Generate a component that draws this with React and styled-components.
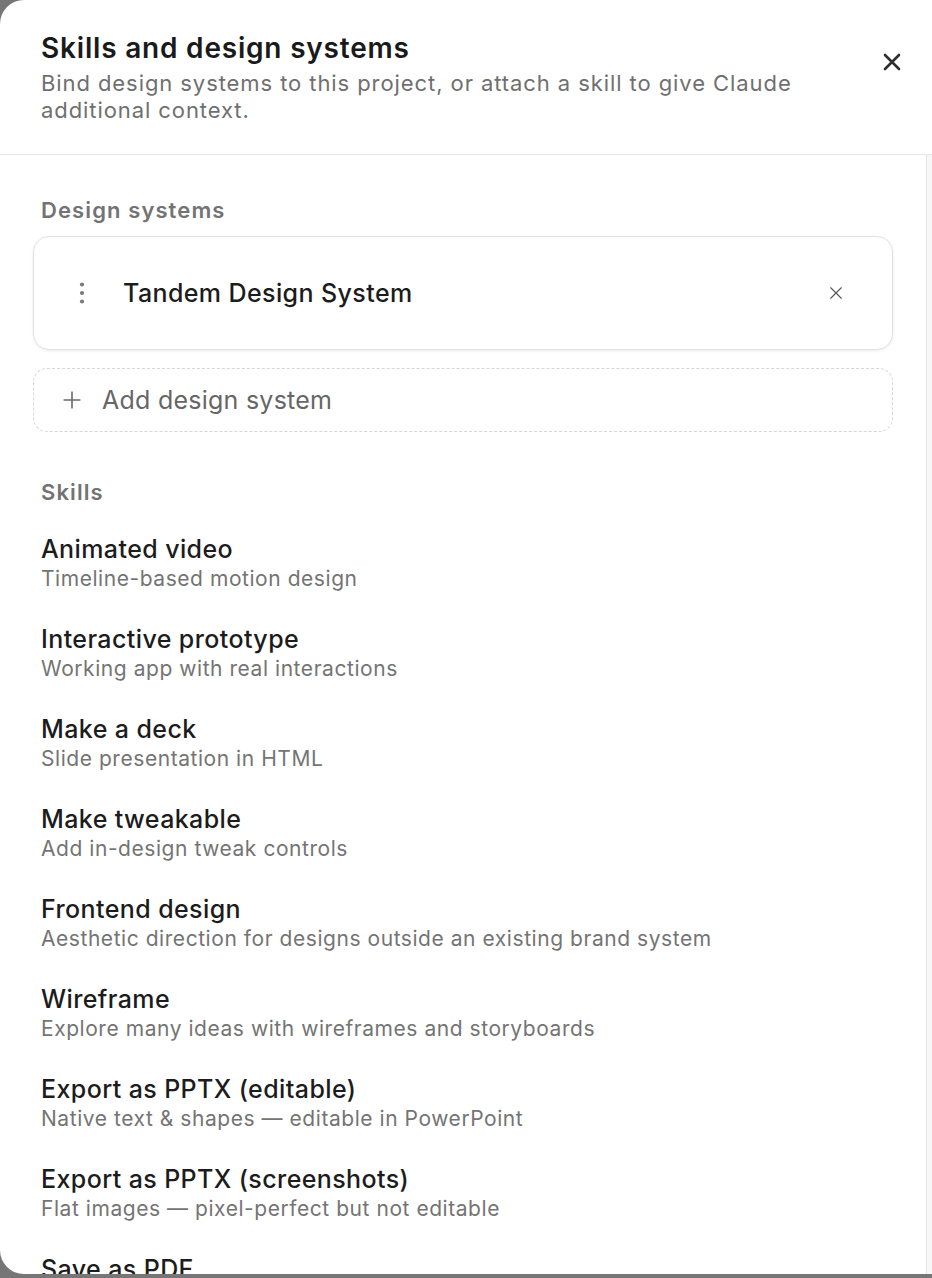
import React from "react";
import styled, { createGlobalStyle } from "styled-components";

const Global = createGlobalStyle`
  html, body {
    margin: 0;
    padding: 0;
    background: #767676;
  }
  body {
    font-family: Inter, "Noto Sans", "Liberation Sans", sans-serif;
    -webkit-font-smoothing: antialiased;
  }
`;

const Panel = styled.div`
  width: 932px;
  height: 1274px;
  background: #ffffff;
  border-radius: 24px 0 0 24px;
  overflow: hidden;
  display: flex;
  flex-direction: column;
`;

const Header = styled.header`
  flex-shrink: 0;
  display: flex;
  align-items: flex-start;
  justify-content: space-between;
  padding: 32px 24px 30px 41px;
  border-bottom: 1px solid #e6e6e6;
`;

const HeaderText = styled.div`
  display: flex;
  flex-direction: column;
  gap: 6px;
`;

const Title = styled.h1`
  margin: 0;
  font-size: 28px;
  line-height: 32px;
  font-weight: 600;
  color: #1a1a1a;
  letter-spacing: 0.8px;
`;

const Subtitle = styled.p`
  margin: 0;
  max-width: 800px;
  font-size: 22px;
  line-height: 27px;
  font-weight: 400;
  letter-spacing: 0.92px;
  color: #6f6f6f;
`;

const CloseButton = styled.button`
  width: 32px;
  height: 32px;
  margin-top: 14px;
  border: none;
  background: transparent;
  padding: 0;
  display: flex;
  align-items: center;
  justify-content: center;
  color: #2e2e2e;
`;

const Body = styled.div`
  flex: 1;
  display: flex;
  min-height: 0;
`;

const Content = styled.div`
  flex: 1;
  overflow: hidden;
  padding: 41px 33px 0 33px;
  display: flex;
  flex-direction: column;
  & > * {
    flex-shrink: 0;
  }
`;

const ScrollTrack = styled.div`
  width: 5px;
  background: #f7f7f7;
  border-left: 1px solid #e6e6e6;
`;

const SectionLabel = styled.h2`
  margin: 0 0 0 8px;
  font-size: 22px;
  line-height: 28px;
  font-weight: 600;
  letter-spacing: 1.1px;
  color: #737373;
`;

const Card = styled.div`
  margin-top: 12px;
  height: 114px;
  box-sizing: border-box;
  border: 1px solid #e1e1e1;
  border-radius: 16px;
  box-shadow: 0 1px 3px rgba(0, 0, 0, 0.08);
  display: flex;
  align-items: center;
  padding: 0 47px 0 45px;
`;

const CardName = styled.span`
  flex: 1;
  margin-left: 38px;
  font-size: 25px;
  font-weight: 500;
  letter-spacing: 0.4px;
  color: #1c1c1c;
`;

const AddBox = styled.button`
  margin-top: 18px;
  height: 64px;
  box-sizing: border-box;
  border: 1.5px dashed #d6d6d6;
  border-radius: 14px;
  background: transparent;
  display: flex;
  align-items: center;
  gap: 20px;
  padding: 0 0 0 28px;
  font-family: inherit;
  font-size: 25px;
  font-weight: 400;
  letter-spacing: 0.25px;
  color: #666666;
  text-align: left;
`;

const SkillsLabel = styled(SectionLabel)`
  margin-top: 46px;
`;

const SkillList = styled.ul`
  list-style: none;
  margin: 28px 0 0 0;
  padding: 0 0 0 8px;
  display: flex;
  flex-direction: column;
  gap: 30px;
`;

const Skill = styled.li`
  display: flex;
  flex-direction: column;
`;

const SkillName = styled.span`
  font-size: 25px;
  line-height: 30px;
  font-weight: 500;
  letter-spacing: 0.4px;
  color: #1c1c1c;
`;

const SkillDesc = styled.span`
  font-size: 21px;
  line-height: 30px;
  font-weight: 400;
  letter-spacing: 0.55px;
  color: #747474;
`;

const CloseIcon = ({ size, stroke, color }) => (
  <svg width={size} height={size} viewBox="0 0 24 24" fill="none">
    <path
      d="M5 5L19 19M19 5L5 19"
      stroke={color}
      strokeWidth={stroke}
      strokeLinecap="round"
    />
  </svg>
);

const KebabIcon = () => (
  <svg width="6" height="24" viewBox="0 0 6 24" fill="#7a7a7a">
    <circle cx="3" cy="3.5" r="2.1" />
    <circle cx="3" cy="12" r="2.1" />
    <circle cx="3" cy="20.5" r="2.1" />
  </svg>
);

const PlusIcon = () => (
  <svg width="20" height="20" viewBox="0 0 20 20" fill="none">
    <path d="M10 1.5V18.5M1.5 10H18.5" stroke="#6a6a6a" strokeWidth="1.6" />
  </svg>
);

const skills = [
  ["Animated video", "Timeline-based motion design"],
  ["Interactive prototype", "Working app with real interactions"],
  ["Make a deck", "Slide presentation in HTML"],
  ["Make tweakable", "Add in-design tweak controls"],
  ["Frontend design", "Aesthetic direction for designs outside an existing brand system"],
  ["Wireframe", "Explore many ideas with wireframes and storyboards"],
  ["Export as PPTX (editable)", "Native text & shapes — editable in PowerPoint"],
  ["Export as PPTX (screenshots)", "Flat images — pixel-perfect but not editable"],
  ["Save as PDF", "Print-ready document export"],
];

export default function App() {
  return (
    <>
      <Global />
      <Panel>
        <Header>
          <HeaderText>
            <Title>Skills and design systems</Title>
            <Subtitle>
              Bind design systems to this project, or attach a skill to give Claude
              additional context.
            </Subtitle>
          </HeaderText>
          <CloseButton aria-label="Close">
            <CloseIcon size={24} stroke={2.6} color="#2e2e2e" />
          </CloseButton>
        </Header>
        <Body>
          <Content>
            <SectionLabel>Design systems</SectionLabel>
            <Card>
              <KebabIcon />
              <CardName>Tandem Design System</CardName>
              <CloseIcon size={18} stroke={1.5} color="#555555" />
            </Card>
            <AddBox>
              <PlusIcon />
              Add design system
            </AddBox>
            <SkillsLabel>Skills</SkillsLabel>
            <SkillList>
              {skills.map(([name, desc]) => (
                <Skill key={name}>
                  <SkillName>{name}</SkillName>
                  <SkillDesc>{desc}</SkillDesc>
                </Skill>
              ))}
            </SkillList>
          </Content>
          <ScrollTrack />
        </Body>
      </Panel>
    </>
  );
}
